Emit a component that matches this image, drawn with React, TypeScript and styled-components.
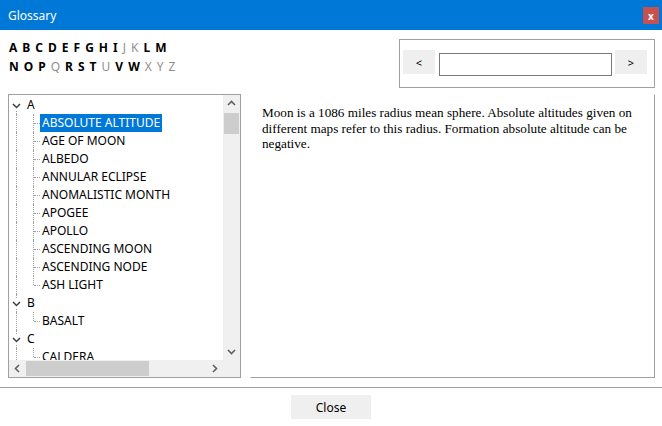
import React from 'react';
import styled, { createGlobalStyle } from 'styled-components';

const GlobalStyle = createGlobalStyle`
    html, body {
        margin: 0;
        padding: 0;
        background: #ffffff;
    }
    body {
        font-family: "Noto Sans", "Open Sans", sans-serif;
        font-size: 12px;
        color: #000;
    }
`;

interface Group {
    letter: string,
    items: string[]
}

const groups: Group[] = [
    { letter: 'A', items: ['ABSOLUTE ALTITUDE', 'AGE OF MOON', 'ALBEDO', 'ANNULAR ECLIPSE', 'ANOMALISTIC MONTH', 'APOGEE', 'APOLLO', 'ASCENDING MOON', 'ASCENDING NODE', 'ASH LIGHT'] },
    { letter: 'B', items: ['BASALT'] },
    { letter: 'C', items: ['CALDERA'] },
];

const rowOne = ['A', 'B', 'C', 'D', 'E', 'F', 'G', 'H', 'I', 'J', 'K', 'L', 'M'];
const rowTwo = ['N', 'O', 'P', 'Q', 'R', 'S', 'T', 'U', 'V', 'W', 'X', 'Y', 'Z'];
const disabled = ['J', 'K', 'Q', 'U', 'X', 'Y', 'Z'];

const Chevron = ({ dir }: { dir: 'up' | 'down' | 'left' | 'right' }) => {
    const points = {
        up: '1,6 4.5,2.5 8,6',
        down: '1,3 4.5,6.5 8,3',
        left: '6,1 2.5,4.5 6,8',
        right: '3,1 6.5,4.5 3,8',
    }[dir];
    return (
        <svg width="9" height="9" viewBox="0 0 9 9">
            <polyline points={points} fill="none" stroke="#606060" strokeWidth="1.6" />
        </svg>
    );
};

const Expander = () => (
    <svg width="9" height="9" viewBox="0 0 9 9">
        <polyline points="1,3 4.5,6.5 8,3" fill="none" stroke="#404040" strokeWidth="1.5" />
    </svg>
);

export default function App() {

    const __renderAlphabet = (letters: string[]) => (
        <LetterRow>
            {letters.map((l) => (
                <Letter key={l} off={disabled.includes(l)}>{l}</Letter>
            ))}
        </LetterRow>
    );

    const __renderGroup = (group: Group, gi: number) => (
        <div key={group.letter}>
            <TreeRow>
                <RootCell line={gi === 0 ? 'bottom' : 'full'}>
                    <ExpanderBox><Expander /></ExpanderBox>
                </RootCell>
                <HeaderLabel>{group.letter}</HeaderLabel>
            </TreeRow>
            {group.items.map((item, i) => (
                <TreeRow key={item}>
                    <RootCell line="full" />
                    <ChildCell last={i === group.items.length - 1} />
                    <ItemLabel selected={gi === 0 && i === 0}>{item}</ItemLabel>
                </TreeRow>
            ))}
        </div>
    );

    return (
        <>
            <GlobalStyle />
            <Window>
                <TitleBar>
                    <Title>Glossary</Title>
                    <CloseBox>x</CloseBox>
                </TitleBar>

                <TopArea>
                    <Alphabet>
                        {__renderAlphabet(rowOne)}
                        {__renderAlphabet(rowTwo)}
                    </Alphabet>
                    <NavBox>
                        <NavButton>&lt;</NavButton>
                        <SearchInput type="text" />
                        <NavButton>&gt;</NavButton>
                    </NavBox>
                </TopArea>

                <MainRow>
                    <TreeBox>
                        <TreeContent>
                            {groups.map(__renderGroup)}
                        </TreeContent>
                        <VScroll>
                            <ArrowCell><Chevron dir="up" /></ArrowCell>
                            <VTrack>
                                <VThumb />
                            </VTrack>
                            <ArrowCell><Chevron dir="down" /></ArrowCell>
                        </VScroll>
                        <HScroll>
                            <ArrowCell><Chevron dir="left" /></ArrowCell>
                            <HTrack>
                                <HThumb />
                            </HTrack>
                            <ArrowCell><Chevron dir="right" /></ArrowCell>
                        </HScroll>
                        <Corner />
                    </TreeBox>

                    <TextPanel>
                        Moon is a 1086 miles radius mean sphere. Absolute altitudes given on different maps refer to this radius. Formation absolute altitude can be negative.
                    </TextPanel>
                </MainRow>

                <Footer>
                    <CloseButton>Close</CloseButton>
                </Footer>
            </Window>
        </>
    );
}

const Window = styled.div`
    width: 662px;
    height: 426px;
    display: flex;
    flex-direction: column;
    overflow: hidden;
    background: #fff;
`

const TitleBar = styled.div`
    height: 30px;
    background: #0078d7;
    display: flex;
    align-items: center;
    justify-content: space-between;
    padding: 0 3px 0 8px;
    box-sizing: border-box;
    flex-shrink: 0;
`

const Title = styled.span`
    color: #fff;
    font-size: 12px;
`

const CloseBox = styled.div`
    width: 16px;
    height: 17px;
    margin-top: 1px;
    background: #c75050;
    color: #fff;
    font-size: 10px;
    font-weight: bold;
    display: flex;
    align-items: center;
    justify-content: center;
    line-height: 1;
`

const TopArea = styled.div`
    height: 64px;
    display: flex;
    justify-content: space-between;
    align-items: flex-start;
    padding: 0 7px 0 9px;
    flex-shrink: 0;
`

const Alphabet = styled.div`
    margin-top: 8px;
    display: flex;
    flex-direction: column;
`

const LetterRow = styled.div`
    display: flex;
    gap: 5px;
    height: 19px;
    align-items: center;
`

const Letter = styled.span<{ off: boolean }>`
    font-size: 12px;
    font-weight: ${(p) => (p.off ? 400 : 700)};
    color: ${(p) => (p.off ? '#8f8f8f' : '#000')};
    cursor: ${(p) => (p.off ? 'default' : 'pointer')};
`

const NavBox = styled.div`
    margin-top: 9px;
    width: 256px;
    height: 49px;
    box-sizing: border-box;
    border: 1px solid #a0a0a0;
    display: flex;
    align-items: flex-start;
    padding: 10px 7px 0 3px;
`

const NavButton = styled.div`
    width: 32px;
    height: 24px;
    background: #efefef;
    display: flex;
    align-items: center;
    justify-content: center;
    font-size: 11px;
    color: #000;
`

const SearchInput = styled.input`
    width: 173px;
    height: 23px;
    box-sizing: border-box;
    margin: 3px 3px 0 4px;
    border: 1px solid #7a7a7a;
    padding: 0 3px;
    outline: none;
`

const MainRow = styled.div`
    height: 284px;
    display: flex;
    gap: 9px;
    padding: 0 6px 0 8px;
    flex-shrink: 0;
`

const TreeBox = styled.div`
    width: 233px;
    height: 284px;
    box-sizing: border-box;
    border: 1px solid #a0a0a0;
    display: grid;
    grid-template-columns: 1fr 17px;
    grid-template-rows: 1fr 17px;
    overflow: hidden;
`

const TreeContent = styled.div`
    overflow: hidden;
    padding-top: 1px;
`

const TreeRow = styled.div`
    height: 18px;
    display: flex;
    align-items: stretch;
    white-space: nowrap;
`

const RootCell = styled.div<{ line?: 'full' | 'bottom' }>`
    position: relative;
    width: 16px;
    flex-shrink: 0;
    &::before {
        content: '';
        position: absolute;
        left: 7px;
        top: ${(p) => (p.line === 'bottom' ? '12px' : '0')};
        bottom: 0;
        border-left: 1px dotted #a0a0a0;
    }
`

const ExpanderBox = styled.div`
    position: absolute;
    left: 3px;
    top: 5px;
    width: 9px;
    height: 9px;
    background: #fff;
    display: flex;
    z-index: 1;
`

const ChildCell = styled.div<{ last: boolean }>`
    position: relative;
    width: 15px;
    flex-shrink: 0;
    &::before {
        content: '';
        position: absolute;
        left: 8px;
        top: 0;
        height: ${(p) => (p.last ? '9px' : '18px')};
        border-left: 1px dotted #a0a0a0;
    }
    &::after {
        content: '';
        position: absolute;
        left: 9px;
        width: 6px;
        top: 9px;
        border-top: 1px dotted #a0a0a0;
    }
`

const HeaderLabel = styled.span`
    padding-left: 2px;
    line-height: 18px;
    font-size: 12px;
`

const ItemLabel = styled.span<{ selected: boolean }>`
    padding: 0 2px;
    line-height: 18px;
    font-size: 12px;
    background: ${(p) => (p.selected ? '#0078d7' : 'transparent')};
    color: ${(p) => (p.selected ? '#fff' : '#000')};
`

const VScroll = styled.div`
    background: #f0f0f0;
    display: flex;
    flex-direction: column;
`

const HScroll = styled.div`
    background: #f0f0f0;
    display: flex;
`

const Corner = styled.div`
    background: #f0f0f0;
`

const ArrowCell = styled.div`
    width: 17px;
    height: 17px;
    flex-shrink: 0;
    display: flex;
    align-items: center;
    justify-content: center;
`

const VTrack = styled.div`
    flex: 1;
    padding: 1px 1px 0 1px;
`

const VThumb = styled.div`
    height: 21px;
    background: #cdcdcd;
`

const HTrack = styled.div`
    flex: 1;
    padding: 1px 0 1px 0;
`

const HThumb = styled.div`
    width: 123px;
    height: 100%;
    background: #cdcdcd;
`

const TextPanel = styled.div`
    width: 405px;
    height: 284px;
    box-sizing: border-box;
    border: 1px solid #a0a0a0;
    border-top-color: #fff;
    border-left-color: #fff;
    padding: 10px 11px 0 11px;
    font-family: "Liberation Serif", "Times New Roman", serif;
    font-size: 13.2px;
    line-height: 15.5px;
`

const Footer = styled.div`
    margin-top: 9px;
    border-top: 1px solid #a0a0a0;
    flex: 1;
    display: flex;
    justify-content: center;
    align-items: flex-start;
    padding-top: 7px;
`

const CloseButton = styled.div`
    width: 80px;
    height: 24px;
    background: #efefef;
    display: flex;
    align-items: center;
    justify-content: center;
    font-size: 12px;
`
